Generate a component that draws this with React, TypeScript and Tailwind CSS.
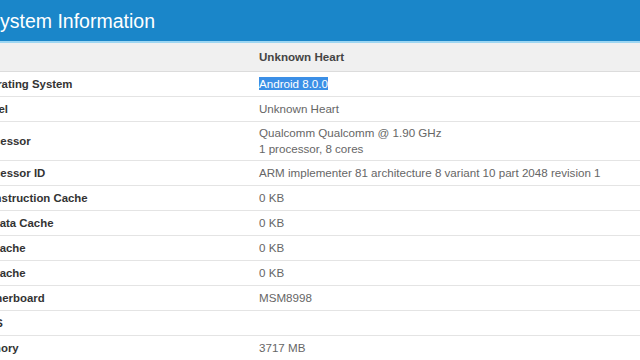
import React from "react";

type Row = { label: string; value: React.ReactNode; tall?: boolean };

const rows: Row[] = [
  {
    label: "Operating System",
    value: <span className="bg-[#3b8fe6] text-white">Android 8.0.0</span>,
  },
  { label: "Model", value: "Unknown Heart" },
  {
    label: "Processor",
    value: (
      <>
        Qualcomm Qualcomm @ 1.90 GHz
        <br />1 processor, 8 cores
      </>
    ),
    tall: true,
  },
  {
    label: "Processor ID",
    value: "ARM implementer 81 architecture 8 variant 10 part 2048 revision 1",
  },
  { label: "L1 Instruction Cache", value: "0 KB" },
  { label: "L1 Data Cache", value: "0 KB" },
  { label: "L2 Cache", value: "0 KB" },
  { label: "L3 Cache", value: "0 KB" },
  { label: "Motherboard", value: "MSM8998" },
  { label: "BIOS", value: "" },
  { label: "Memory", value: "3717 MB" },
];

export default function App() {
  return (
    <div
      className="w-[640px] h-[360px] overflow-hidden bg-white"
      style={{ fontFamily: '"Liberation Sans", Arial, sans-serif' }}
    >
      <div className="h-[41px] bg-[#1a86c9] flex items-center">
        <div className="ml-[-13px] text-[19.5px] leading-[22px] text-white">
          System Information
        </div>
      </div>
      <div className="h-[2px] bg-[#9dd6f2]" />
      <div className="ml-[-25px]">
        <div className="grid grid-cols-[284px_1fr] h-[29px] items-center bg-[#f0f0f0] border-b border-[#dcdcdc] text-[11.6px] font-bold text-[#444]">
          <div />
          <div>Unknown Heart</div>
        </div>
        {rows.map((r, i) => (
          <div
            key={i}
            className={`grid grid-cols-[284px_1fr] items-center border-b border-[#e4e4e4] text-[11.6px] leading-[16px] ${
              r.tall ? "h-[39px]" : "h-[25px]"
            }`}
          >
            <div className="font-bold text-[#333] text-[11.4px]">{r.label}</div>
            <div className="text-[#666]">{r.value}</div>
          </div>
        ))}
      </div>
    </div>
  );
}
